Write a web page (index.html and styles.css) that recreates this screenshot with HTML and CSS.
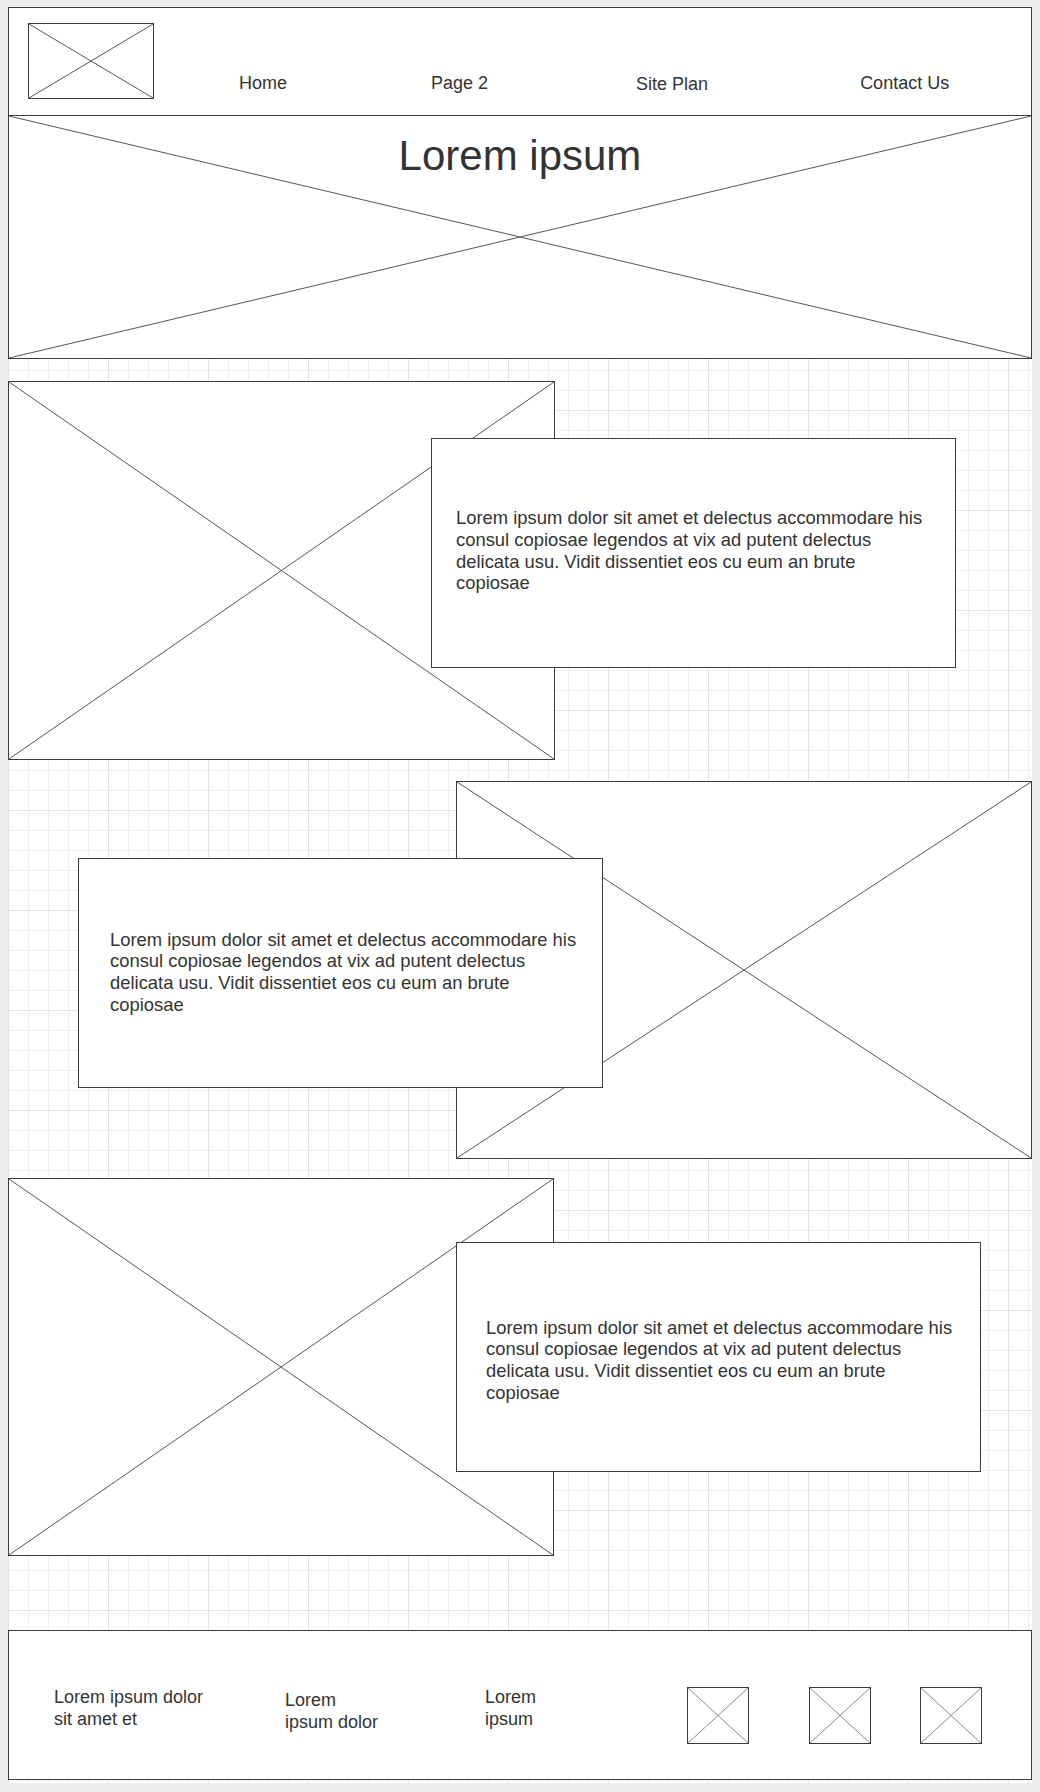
FILE: index.html
```html
<!DOCTYPE html>
<html lang="en">
    <head>
        <meta charset="UTF-8" />
        <meta name="viewport" content="width=device-width, initial-scale=1.0" />
        <title>Wireframe</title>
        <link rel="stylesheet" href="styles.css">
    </head>
    <body>
        <div class="canvas">
            <header class="header">
                <div class="ph logo">
                    <svg class="cross" viewBox="0 0 100 100" preserveAspectRatio="none"><line x1="0" y1="0" x2="100" y2="100" /><line x1="100" y1="0" x2="0" y2="100" /></svg>
                </div>
                <nav class="nav">
                    <a href="#" class="nav-home">Home</a>
                    <a href="#" class="nav-page">Page 2</a>
                    <a href="#" class="nav-plan">Site Plan</a>
                    <a href="#" class="nav-contact">Contact Us</a>
                </nav>
            </header>

            <section class="ph hero">
                <svg class="cross" viewBox="0 0 100 100" preserveAspectRatio="none"><line x1="0" y1="0" x2="100" y2="100" /><line x1="100" y1="0" x2="0" y2="100" /></svg>
                <h1>Lorem ipsum</h1>
            </section>

            <div class="feature feature-1">
                <div class="ph shot">
                    <svg class="cross" viewBox="0 0 100 100" preserveAspectRatio="none"><line x1="0" y1="0" x2="100" y2="100" /><line x1="100" y1="0" x2="0" y2="100" /></svg>
                </div>
                <div class="card">
                    <p>Lorem ipsum dolor sit amet et delectus accommodare his consul copiosae legendos at vix ad putent delectus delicata usu. Vidit dissentiet eos cu eum an brute copiosae</p>
                </div>
            </div>

            <div class="feature feature-2">
                <div class="ph shot">
                    <svg class="cross" viewBox="0 0 100 100" preserveAspectRatio="none"><line x1="0" y1="0" x2="100" y2="100" /><line x1="100" y1="0" x2="0" y2="100" /></svg>
                </div>
                <div class="card">
                    <p>Lorem ipsum dolor sit amet et delectus accommodare his consul copiosae legendos at vix ad putent delectus delicata usu. Vidit dissentiet eos cu eum an brute copiosae</p>
                </div>
            </div>

            <div class="feature feature-3">
                <div class="ph shot">
                    <svg class="cross" viewBox="0 0 100 100" preserveAspectRatio="none"><line x1="0" y1="0" x2="100" y2="100" /><line x1="100" y1="0" x2="0" y2="100" /></svg>
                </div>
                <div class="card">
                    <p>Lorem ipsum dolor sit amet et delectus accommodare his consul copiosae legendos at vix ad putent delectus delicata usu. Vidit dissentiet eos cu eum an brute copiosae</p>
                </div>
            </div>

            <footer class="footer">
                <p class="foot-text foot-1">Lorem ipsum dolor sit amet et</p>
                <p class="foot-text foot-2">Lorem ipsum dolor</p>
                <p class="foot-text foot-3">Lorem ipsum</p>
                <div class="ph icon">
                    <svg class="cross" viewBox="0 0 100 100" preserveAspectRatio="none"><line x1="0" y1="0" x2="100" y2="100" /><line x1="100" y1="0" x2="0" y2="100" /></svg>
                </div>
                <div class="ph icon">
                    <svg class="cross" viewBox="0 0 100 100" preserveAspectRatio="none"><line x1="0" y1="0" x2="100" y2="100" /><line x1="100" y1="0" x2="0" y2="100" /></svg>
                </div>
                <div class="ph icon">
                    <svg class="cross" viewBox="0 0 100 100" preserveAspectRatio="none"><line x1="0" y1="0" x2="100" y2="100" /><line x1="100" y1="0" x2="0" y2="100" /></svg>
                </div>
            </footer>
        </div>
    </body>
</html>
```

FILE: styles.css
```css
* {
    box-sizing: border-box;
}
body {
    margin: 7px 8px 0;
    background-color: #ededed;
    font-family: 'Liberation Sans', Arial, sans-serif;
    color: #333;
}
.canvas {
    width: 1024px;
    padding-bottom: 3px;
    background-color: #fff;
    /* сетка как в редакторе: мелкая 20px, крупная 100px */
    background-image:
        linear-gradient(to right, #e3e3e3 1px, transparent 1px),
        linear-gradient(to bottom, #e3e3e3 1px, transparent 1px),
        linear-gradient(to right, #efefef 1px, transparent 1px),
        linear-gradient(to bottom, #efefef 1px, transparent 1px);
    background-size: 100px 100px, 100px 100px, 20px 20px, 20px 20px;
    background-position: 0 3px;
}

/* плейсхолдер-картинка с крестом */
.ph {
    position: relative;
    background-color: #fff;
    border: 1px solid #3c3c3c;
}
.cross {
    position: absolute;
    top: 0;
    left: 0;
    width: 100%;
    height: 100%;
}
.cross line {
    stroke: #555;
    stroke-width: 1;
    vector-effect: non-scaling-stroke;
}

.header {
    display: flex;
    align-items: flex-start;
    height: 109px;
    background-color: #fff;
    border: 1px solid #3c3c3c;
}
.logo {
    width: 126px;
    height: 76px;
    margin: 15px 0 0 19px;
}
.nav {
    display: flex;
    margin: 65px 0 0 85px;
    font-size: 18px;
}
.nav a {
    color: #333;
    text-decoration: none;
}
.nav-page {
    margin-left: 144px;
}
.nav-plan {
    margin: 1px 0 0 148px;
}
.nav-contact {
    margin-left: 152px;
}

.hero {
    height: 243px;
    border-top: none;
    padding-top: 16px;
    text-align: center;
}
.hero h1 {
    position: relative;
    margin: 0;
    font-size: 42px;
    font-weight: normal;
    line-height: 48px;
}

.feature {
    position: relative;
}
.feature-1 {
    margin-top: 22px;
}
.feature-2 {
    margin-top: 21px;
}
.feature-3 {
    margin-top: 19px;
}
.shot {
    width: 547px;
    height: 379px;
}
.feature-2 .shot {
    width: 576px;
    height: 378px;
    margin-left: 448px;
}
.feature-3 .shot {
    width: 546px;
    height: 378px;
}
.card {
    position: absolute;
    width: 525px;
    height: 230px;
    display: flex;
    align-items: center;
    padding: 0 0 0 24px;
    background-color: #fff;
    border: 1px solid #3c3c3c;
}
.card p {
    max-width: 474px;
    margin: 0;
    font-size: 18.4px;
    line-height: 21.7px;
}
.feature-1 .card {
    top: 57px;
    left: 423px;
    padding-bottom: 5px;
}
.feature-2 .card {
    top: 77px;
    left: 70px;
    padding-left: 31px;
    padding-bottom: 2px;
}
.feature-3 .card {
    top: 64px;
    left: 448px;
    padding-left: 29px;
    padding-top: 6px;
}

.footer {
    display: grid;
    grid-template-columns: 231px 200px 202px 122px 111px 62px;
    align-items: start;
    height: 150px;
    margin-top: 74px;
    padding: 56px 0 0 45px;
    background-color: #fff;
    border: 1px solid #3c3c3c;
}
.foot-text {
    margin: 0;
    font-size: 18px;
    line-height: 21.6px;
}
.foot-1 {
    max-width: 165px;
}
.foot-2 {
    max-width: 98px;
    margin-top: 3px;
}
.foot-3 {
    max-width: 60px;
}
.icon {
    width: 62px;
    height: 57px;
}
.icon .cross line {
    stroke: #8a8a8a;
}
```
